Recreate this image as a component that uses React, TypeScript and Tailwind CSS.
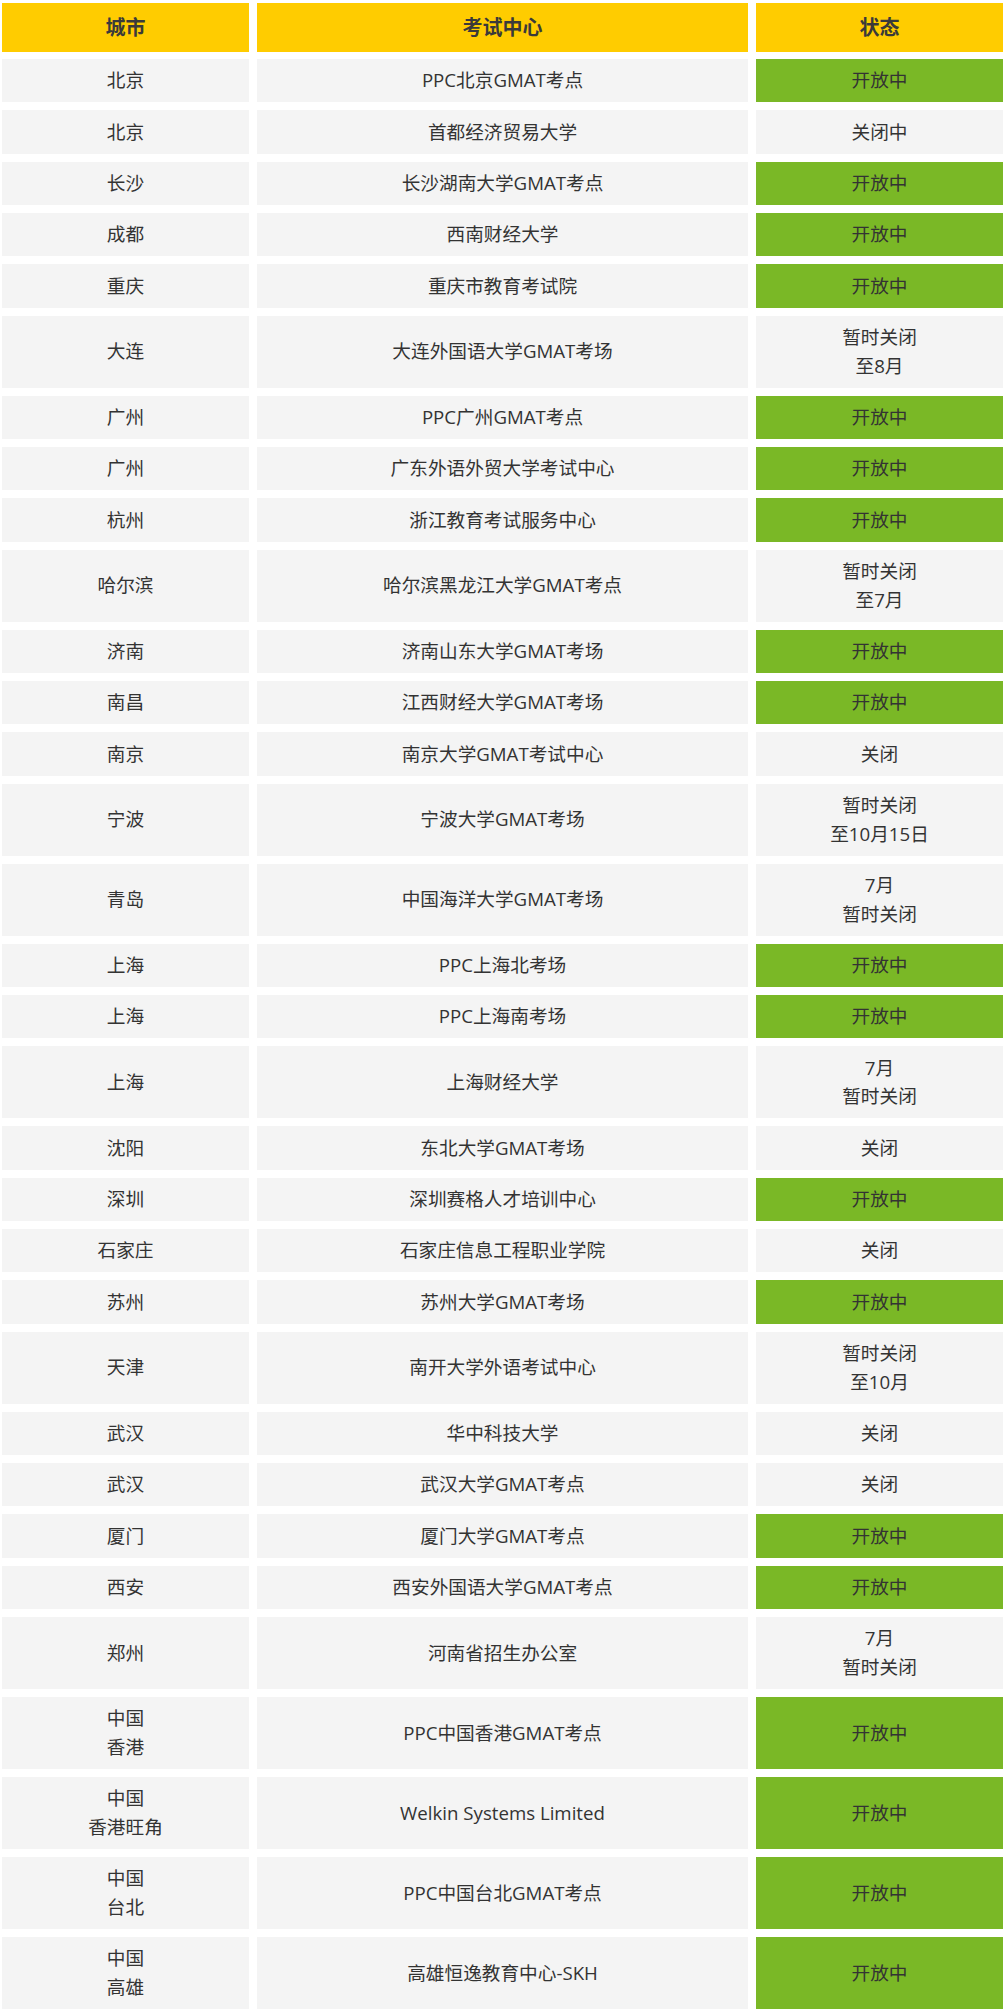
import React from "react";

type Row = {
    city: string[];
    center: string;
    status: string[];
    open: boolean;
};

const rows: Row[] = [
    { city: ["北京"], center: "PPC北京GMAT考点", status: ["开放中"], open: true },
    { city: ["北京"], center: "首都经济贸易大学", status: ["关闭中"], open: false },
    { city: ["长沙"], center: "长沙湖南大学GMAT考点", status: ["开放中"], open: true },
    { city: ["成都"], center: "西南财经大学", status: ["开放中"], open: true },
    { city: ["重庆"], center: "重庆市教育考试院", status: ["开放中"], open: true },
    { city: ["大连"], center: "大连外国语大学GMAT考场", status: ["暂时关闭", "至8月"], open: false },
    { city: ["广州"], center: "PPC广州GMAT考点", status: ["开放中"], open: true },
    { city: ["广州"], center: "广东外语外贸大学考试中心", status: ["开放中"], open: true },
    { city: ["杭州"], center: "浙江教育考试服务中心", status: ["开放中"], open: true },
    { city: ["哈尔滨"], center: "哈尔滨黑龙江大学GMAT考点", status: ["暂时关闭", "至7月"], open: false },
    { city: ["济南"], center: "济南山东大学GMAT考场", status: ["开放中"], open: true },
    { city: ["南昌"], center: "江西财经大学GMAT考场", status: ["开放中"], open: true },
    { city: ["南京"], center: "南京大学GMAT考试中心", status: ["关闭"], open: false },
    { city: ["宁波"], center: "宁波大学GMAT考场", status: ["暂时关闭", "至10月15日"], open: false },
    { city: ["青岛"], center: "中国海洋大学GMAT考场", status: ["7月", "暂时关闭"], open: false },
    { city: ["上海"], center: "PPC上海北考场", status: ["开放中"], open: true },
    { city: ["上海"], center: "PPC上海南考场", status: ["开放中"], open: true },
    { city: ["上海"], center: "上海财经大学", status: ["7月", "暂时关闭"], open: false },
    { city: ["沈阳"], center: "东北大学GMAT考场", status: ["关闭"], open: false },
    { city: ["深圳"], center: "深圳赛格人才培训中心", status: ["开放中"], open: true },
    { city: ["石家庄"], center: "石家庄信息工程职业学院", status: ["关闭"], open: false },
    { city: ["苏州"], center: "苏州大学GMAT考场", status: ["开放中"], open: true },
    { city: ["天津"], center: "南开大学外语考试中心", status: ["暂时关闭", "至10月"], open: false },
    { city: ["武汉"], center: "华中科技大学", status: ["关闭"], open: false },
    { city: ["武汉"], center: "武汉大学GMAT考点", status: ["关闭"], open: false },
    { city: ["厦门"], center: "厦门大学GMAT考点", status: ["开放中"], open: true },
    { city: ["西安"], center: "西安外国语大学GMAT考点", status: ["开放中"], open: true },
    { city: ["郑州"], center: "河南省招生办公室", status: ["7月", "暂时关闭"], open: false },
    { city: ["中国", "香港"], center: "PPC中国香港GMAT考点", status: ["开放中"], open: true },
    { city: ["中国", "香港旺角"], center: "Welkin Systems Limited", status: ["开放中"], open: true },
    { city: ["中国", "台北"], center: "PPC中国台北GMAT考点", status: ["开放中"], open: true },
    { city: ["中国", "高雄"], center: "高雄恒逸教育中心-SKH", status: ["开放中"], open: true },
];

function Lines({ lines }: { lines: string[] }) {
    return (
        <>
            {lines.map((l, i) => (
                <div key={i}>{l}</div>
            ))}
        </>
    );
}

export default function App() {
    return (
        <div
            className="w-[1007px] bg-white pt-[3px] pl-[2px] pb-[2px] text-[#333333]"
            style={{ fontFamily: '"Open Sans", "Noto Sans CJK SC", sans-serif' }}
        >
            <div className="grid grid-cols-[247px_491px_247px] gap-2 text-center">
                {/* Header */}
                {["城市", "考试中心", "状态"].map((h) => (
                    <div
                        key={h}
                        className="h-[49px] -mb-px flex items-center justify-center bg-[#ffcc00] text-[20px] font-bold text-[#3a3a3a]"
                    >
                        {h}
                    </div>
                ))}

                {/* Rows */}
                {rows.map((r, i) => (
                    <React.Fragment key={i}>
                        <div className="flex flex-col justify-center bg-[#f4f4f4] py-[7.33px] text-[18.67px] leading-[28.67px]">
                            <Lines lines={r.city} />
                        </div>
                        <div className="flex flex-col justify-center bg-[#f4f4f4] py-[7.33px] text-[18.67px] leading-[28.67px]">
                            {r.center}
                        </div>
                        <div
                            className={
                                r.open
                                    ? "flex flex-col justify-center bg-[#7ab826] py-[7.33px] text-[18.67px] leading-[28.67px]"
                                    : "flex flex-col justify-center bg-[#f4f4f4] py-[7.33px] text-[18.67px] leading-[28.67px]"
                            }
                        >
                            <Lines lines={r.status} />
                        </div>
                    </React.Fragment>
                ))}
            </div>
        </div>
    );
}
